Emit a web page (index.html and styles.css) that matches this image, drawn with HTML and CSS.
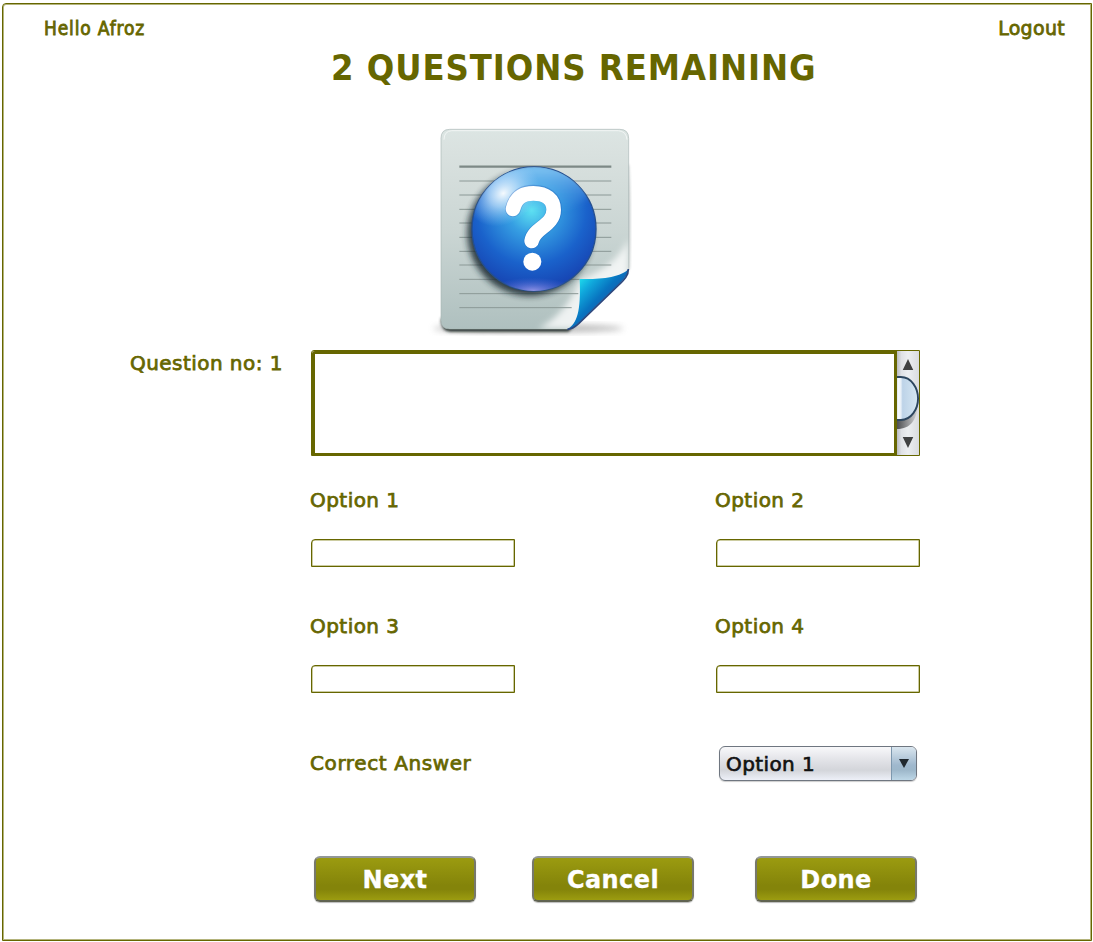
FILE: index.html
```html
<!DOCTYPE html>
<html lang="en">
<head>
<meta charset="utf-8">
<title>Add Questions</title>
<link rel="stylesheet" href="styles.css">
</head>
<body>
<main class="frame">
  <header class="topbar"><span class="hello">Hello Afroz</span><a class="logout">Logout</a></header>
  <h1 class="title"><span>2 QUESTIONS REMAINING</span></h1>
  <svg class="picture" width="220" height="225" viewBox="0 0 660 675">
    <defs>
      <linearGradient id="paper" x1="0" y1="0" x2="0" y2="1"><stop offset="0" stop-color="#dce5e3"/><stop offset=".12" stop-color="#d9e1df"/><stop offset=".5" stop-color="#cbd6d4"/><stop offset="1" stop-color="#afc0bf"/></linearGradient>
      <radialGradient id="ball" gradientUnits="userSpaceOnUse" cx="320" cy="285" r="235"><stop offset="0" stop-color="#5fe3f2"/><stop offset=".3" stop-color="#369fe3"/><stop offset=".7" stop-color="#1a62cb"/><stop offset="1" stop-color="#1746b4"/></radialGradient>
      <linearGradient id="cap" x1="0" y1="0" x2="0" y2="1"><stop offset="0" stop-color="#9edcfa" stop-opacity=".85"/><stop offset="1" stop-color="#4aa0e8" stop-opacity="0"/></linearGradient>
      <radialGradient id="glow"><stop offset="0" stop-color="#fff" stop-opacity=".95"/><stop offset=".4" stop-color="#d6ecff" stop-opacity=".65"/><stop offset="1" stop-color="#9cd0fb" stop-opacity="0"/></radialGradient>
      <radialGradient id="foot"><stop offset="0" stop-color="#a7a2ef" stop-opacity=".8"/><stop offset="1" stop-color="#5d72df" stop-opacity="0"/></radialGradient>
      <linearGradient id="curl" gradientUnits="userSpaceOnUse" x1="460" y1="490" x2="540" y2="565"><stop offset="0" stop-color="#1fe0ee"/><stop offset=".35" stop-color="#10a8dc"/><stop offset=".75" stop-color="#0874c0"/><stop offset="1" stop-color="#1263b2"/></linearGradient>
      <linearGradient id="shine" gradientUnits="userSpaceOnUse" x1="445" y1="435" x2="535" y2="540"><stop offset="0" stop-color="#fff" stop-opacity="0"/><stop offset=".55" stop-color="#fff" stop-opacity=".75"/><stop offset="1" stop-color="#fff" stop-opacity=".8"/></linearGradient>
      <filter id="soft" x="-30%" y="-30%" width="160%" height="160%"><feGaussianBlur stdDeviation="9"/></filter>
      <filter id="shade" x="-30%" y="-30%" width="160%" height="160%"><feGaussianBlur stdDeviation="4"/></filter>
      <clipPath id="sheet"><path d="M74 43H584Q611 43 611 70V465L440 642H74Q48 642 48 616V70Q48 43 74 43Z"/></clipPath>
      <clipPath id="round"><circle cx="327" cy="342" r="186"/></clipPath>
    </defs>
    <ellipse cx="310" cy="640" rx="285" ry="13" fill="#777" opacity=".5" filter="url(#soft)"/>
    <path d="M48 610Q48 650 76 650H430L455 625" fill="#26302f" filter="url(#shade)"/>
    <path d="M611 150Q618 280 613 460L600 475V150Z" fill="#8b9896" opacity=".6" filter="url(#shade)"/>
    <path d="M74 43H584Q611 43 611 70V465L440 642H74Q48 642 48 616V70Q48 43 74 43Z" fill="url(#paper)" stroke="#aab8b6" stroke-width="2"/>
    <path d="M57 74Q57 49 80 47H580Q604 49 606 74" fill="none" stroke="#f1f5f4" stroke-width="3"/>
    <g clip-path="url(#sheet)">
      <path d="M340 642Q430 590 464 492Q575 455 611 370V642Z" fill="url(#shine)" filter="url(#soft)"/>
      <path d="M103 155H559" stroke="#7d8986" stroke-width="7"/>
      <path d="M103 198H559M103 240H559M103 283H559M103 324H559M103 367H559M103 409H559M103 450H559M103 493H464M103 536H460M103 578H440" stroke="#8b9896" stroke-width="3"/>
      <circle cx="314" cy="355" r="187" fill="#17262d" opacity=".85" filter="url(#soft)"/>
    </g>
    <circle cx="327" cy="342" r="186" fill="url(#ball)" stroke="#244f91" stroke-width="4"/>
    <g clip-path="url(#round)">
      <ellipse cx="338" cy="220" rx="160" ry="72" fill="url(#cap)" filter="url(#soft)"/>
      <ellipse cx="235" cy="235" rx="115" ry="90" fill="url(#glow)" transform="rotate(-35 235 235)"/>
      <ellipse cx="323" cy="526" rx="130" ry="38" fill="url(#foot)"/>
    </g>
    <path d="M264 282C272 249 291 233 325 233C363 233 387 252 387 283C387 333 327 338 320 378" fill="none" stroke="#1b4fac" stroke-width="48" stroke-linecap="round" opacity=".3"/>
    <path d="M264 282C272 251 291 235 325 235C363 235 386 254 386 284C386 333 327 338 320 378" fill="none" stroke="#fff" stroke-width="44" stroke-linecap="round"/>
    <circle cx="322" cy="440" r="27" fill="#fff"/>
    <path d="M464 492C520 494 588 488 610 462C609 480 597 493 579 510L461 624C447 638 436 643 427 643C457 624 468 590 464 492Z" fill="url(#curl)"/>
    <path d="M610 462C611 481 598 494 579 512L461 626C449 637 438 643 427 643" fill="none" stroke="#2c477d" stroke-width="5"/>
  </svg>

  <section class="question">
    <label class="label qlabel" for="q">Question no: 1</label>
    <div class="editor">
      <textarea id="q" class="area"></textarea>
      <svg class="scroll" viewBox="0 0 23 104" preserveAspectRatio="none">
        <defs>
          <linearGradient id="track"><stop offset="0" stop-color="#b9bbc0"/><stop offset=".2" stop-color="#dfe1e5"/><stop offset=".5" stop-color="#eceef1"/><stop offset="1" stop-color="#dadce0"/></linearGradient>
          <linearGradient id="thumb"><stop offset="0" stop-color="#cddbe7"/><stop offset=".12" stop-color="#f8fbfe"/><stop offset=".22" stop-color="#e7eff7"/><stop offset=".3" stop-color="#bdd3e8"/><stop offset="1" stop-color="#d6e7f3"/></linearGradient>
          <linearGradient id="under"><stop offset="0" stop-color="#4d4e51"/><stop offset="1" stop-color="#d6d7da"/></linearGradient>
        </defs>
        <path d="M0 0H23V104H0Z" fill="url(#track)"/>
        <path d="M0 60L22 52C21 69 14 78 0 78Z" fill="url(#under)"/>
        <path d="M-1 26H4C15 26 22 37 22 47.500C22 58 15 69 4 69H-1Z" fill="url(#thumb)" stroke="#2c465f" stroke-width="2"/>
        <path d="M11.500 8L17 19H6ZM11.500 97L17 86H6Z" fill="#404142"/>
      </svg>
    </div>
  </section>

  <section class="options">
    <div class="option"><label class="label" for="o1">Option 1</label><input id="o1" class="field"></div>
    <div class="option"><label class="label" for="o2">Option 2</label><input id="o2" class="field"></div>
    <div class="option"><label class="label" for="o3">Option 3</label><input id="o3" class="field"></div>
    <div class="option"><label class="label" for="o4">Option 4</label><input id="o4" class="field"></div>
  </section>

  <section class="answer">
    <span class="label correct">Correct Answer</span>
    <div class="select"><span class="value">Option 1</span><span class="drop"><svg width="10" height="9" viewBox="0 0 10 9"><path d="M0 0H10L5 9Z" fill="#20282e"/></svg></span></div>
  </section>

  <footer class="actions">
    <button class="button">Next</button><button class="button">Cancel</button><button class="button">Done</button>
  </footer>
</main>
</body>
</html>
```
FILE: styles.css
```css
* { box-sizing: border-box; }
body { margin: 0; background: #fff; color: #666600; font-family: "DejaVu Sans", sans-serif; }
.frame { width: 1090px; height: 938px; margin: 3px 0 0 2px; padding: 1px; border: 1px solid #666600; border-top-left-radius: 4px; box-shadow: inset 0 0 0 1px #b4b47c; display: flex; flex-direction: column; overflow: hidden; }
.topbar { flex: none; height: 40px; padding: 10px 25px 0 40px; display: flex; justify-content: space-between; font-size: 19px; line-height: 26px; }
.hello { font-family: "DejaVu Sans Condensed", "DejaVu Sans", sans-serif; font-stretch: condensed; -webkit-text-stroke: .8px #666600; letter-spacing: .85px; }
.logout { -webkit-text-stroke: .8px #666600; letter-spacing: .3px; }
.title { flex: none; margin: 0; height: 68px; padding-left: 327px; font-family: "DejaVu Sans Condensed", "DejaVu Sans", sans-serif; font-stretch: condensed; font-size: 36px; line-height: 46px; letter-spacing: .95px; white-space: nowrap; }
.picture { display: block; flex: none; margin-left: 421px; margin-top: 2px; }
.question { display: flex; flex: none; height: 106px; margin-top: 10px; padding-left: 126px; }
.label { font-size: 20px; line-height: 26px; -webkit-text-stroke: .75px #666600; letter-spacing: .45px; white-space: nowrap; }
.qlabel { width: 181px; }
.editor { display: flex; width: 609px; height: 106px; border: 1px solid #666600; border-top-left-radius: 3px; }
.area { width: 585px; height: 104px; border: 3px solid #666600; border-bottom-width: 2px; border-top-left-radius: 3px; background: #fff; resize: none; outline: 0; margin: 0; flex: none; }
.scroll { display: block; flex: none; width: 22px; height: 104px; }
.options { flex: none; display: grid; grid-template-columns: 405px 205px; grid-auto-rows: 126px; margin: 31px 0 0 306px; }
.option { display: flex; flex-direction: column; align-items: flex-start; }
.option .field { margin: 26px 0 0 1px; }
.field { width: 204px; height: 28px; border: 1px solid #666600; border-top-left-radius: 4px; box-shadow: inset 0 0 0 .5px #999944; outline: 0; }
.answer { flex: none; display: flex; align-items: center; justify-content: space-between; width: 607px; height: 36px; margin: 6px 0 0 306px; }
.correct { letter-spacing: .6px; line-height: 28px; }
.select { width: 198px; height: 35px; display: flex; border: 1.500px solid #6f7680; border-radius: 6px; background: linear-gradient(#f8f8fa, #dfe0e5 45%, #d3d5da 70%, #edf0f8); overflow: hidden; color: #111; box-shadow: 0 1px 1px #ccc; }
.value { flex: 1; padding-left: 6px; font-size: 20px; line-height: 34px; letter-spacing: .4px; -webkit-text-stroke: .65px #111; }
.drop { width: 25px; border-left: 1px solid #7d98ae; background: linear-gradient(#dae6ef, #9fb8cd 55%, #9db7ca 70%, #bdd7e7); display: flex; align-items: center; justify-content: center; }
.actions { flex: none; display: grid; grid-template-columns: 218px 223px 163px; margin: 75px 0 0 310px; }
.button { width: 162px; height: 46px; padding: 3px 0 0; border: 2px solid; border-color: #929798 #77786c #606351 #77786c; border-radius: 6px; background: linear-gradient(#9b9b10, #84840a 65%, #84840a 75%, #9c9c10); color: #fff; font: bold 24px/39px "DejaVu Sans", sans-serif; letter-spacing: .4px; -webkit-text-stroke: .3px #fff; box-shadow: 0 1px 1px #bbb; }
```
